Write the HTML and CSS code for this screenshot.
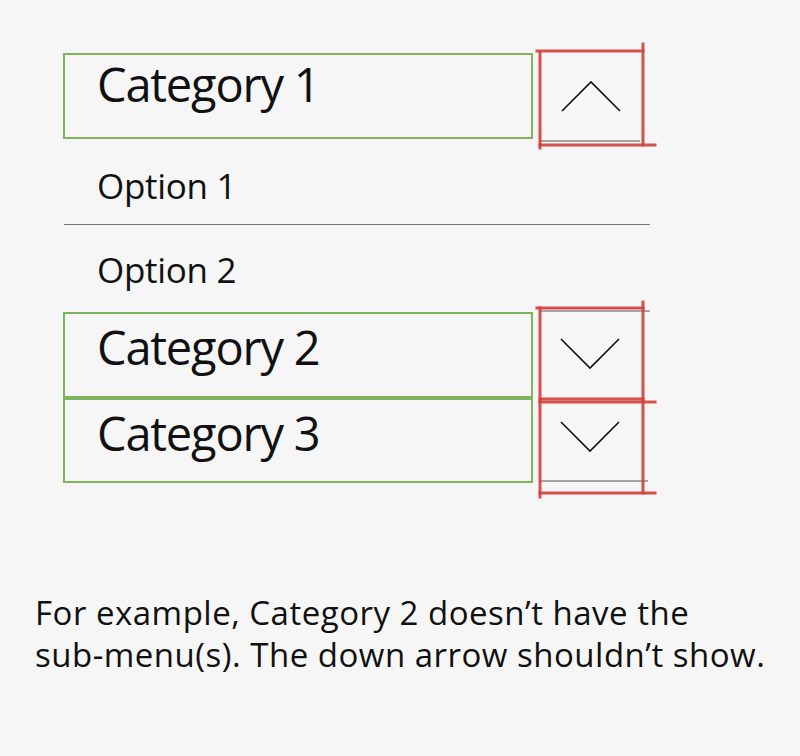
FILE: index.html
```html
<!DOCTYPE html>
<html>
<head>
<meta charset="utf-8">
<link rel="stylesheet" href="styles.css">
</head>
<body>
<div class="page">
  <div class="menu">
    <div class="group">
      <div class="cat-row">
        <div class="label">Category 1</div>
        <div class="toggle"></div>
      </div>
      <svg class="marks marks-1" width="140" height="120" viewBox="0 0 140 120">
        <line class="gray" x1="7" y1="98" x2="107" y2="98"/>
        <line class="red" x1="4" y1="8" x2="110" y2="8"/>
        <line class="red" x1="110" y1="1" x2="110" y2="102"/>
        <line class="red" x1="7" y1="10" x2="7" y2="105"/>
        <line class="red" x1="7" y1="102" x2="122" y2="102"/>
        <polyline class="chev" points="29,68 58,39 87,68"/>
      </svg>
    </div>

    <div class="options">
      <div class="option">Option 1</div>
      <div class="divider"></div>
      <div class="option option-2">Option 2</div>
    </div>

    <div class="group">
      <div class="cat-row">
        <div class="label label-low">Category 2</div>
        <div class="toggle"></div>
      </div>
      <div class="cat-row cat-row-next">
        <div class="label label-low">Category 3</div>
        <div class="toggle"></div>
      </div>
      <svg class="marks marks-2" width="140" height="210" viewBox="0 0 140 210">
        <line class="gray" x1="7" y1="9" x2="117" y2="9"/>
        <line class="gray" x1="7" y1="179" x2="115" y2="179"/>
        <line class="red" x1="4" y1="6" x2="110" y2="6"/>
        <line class="red" x1="110" y1="0" x2="110" y2="191"/>
        <line class="red" x1="7" y1="6" x2="7" y2="195"/>
        <line class="red" x1="7" y1="97" x2="110" y2="97"/>
        <line class="red" x1="7" y1="100" x2="122" y2="100"/>
        <line class="red" x1="7" y1="191" x2="122" y2="191"/>
        <polyline class="chev" points="28,37 57,66 86,37"/>
        <polyline class="chev" points="28,120 57,149 86,120"/>
      </svg>
    </div>
  </div>

  <p class="note">For example, Category 2 doesn’t have the<br>sub-menu(s). The down arrow shouldn’t show.</p>
</div>
</body>
</html>
```

FILE: styles.css
```css
html, body {
  margin: 0;
  padding: 0;
  background: #f6f6f6;
}

body {
  font-family: "Open Sans", "Noto Sans", sans-serif;
  color: #111;
}

.page {
  width: 800px;
  height: 756px;
  box-sizing: border-box;
  padding-top: 53px;
}

.menu {
  padding-left: 63px;
  width: 587px;
}

.group {
  position: relative;
}

.cat-row {
  display: flex;
  height: 86px;
}

.cat-row-next {
  height: 85px;
}

.label {
  width: 470px;
  height: 100%;
  box-sizing: border-box;
  border: 2px solid #7fb35c;
  padding: 6px 0 0 32px;
  font-size: 47px;
  line-height: 47px;
  letter-spacing: -1.2px;
  color: #111;
}

.label-low {
  padding-top: 10px;
}

.toggle {
  flex: 1;
}

.marks {
  position: absolute;
  left: 470px;
  top: -10px;
  overflow: visible;
}

.marks .red {
  stroke: #d2403a;
  stroke-width: 3;
  stroke-opacity: 0.9;
  stroke-linecap: square;
}

.marks .gray {
  stroke: #555;
  stroke-width: 1;
}

.marks .chev {
  fill: none;
  stroke: #111;
  stroke-width: 1.6;
}

.option {
  height: 85px;
  box-sizing: border-box;
  padding: 29px 0 0 34px;
  font-size: 35px;
  line-height: 35px;
  letter-spacing: -0.3px;
}

.option-2 {
  height: 87px;
  padding-top: 27px;
}

.divider {
  height: 1px;
  width: 586px;
  margin-left: 1px;
  background: #777;
}

.note {
  margin: 0;
  padding: 109px 0 0 35px;
  font-size: 33px;
  line-height: 42px;
  letter-spacing: 0.5px;
  color: #111;
}
```
